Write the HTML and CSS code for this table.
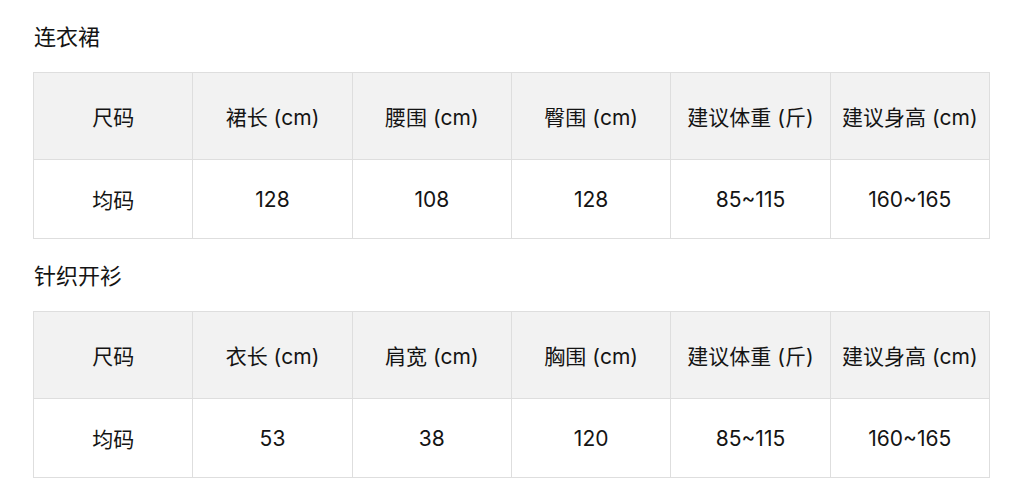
FILE: index.html
```html
<!DOCTYPE html>
<html lang="zh-CN">
<head>
<meta charset="utf-8">
<title>尺码表</title>
<link rel="stylesheet" href="styles.css">
</head>
<body>
<div class="page">
  <section class="section">
    <h2 class="title">连衣裙</h2>
    <table class="size-table">
      <thead>
        <tr><th>尺码</th><th>裙长 (cm)</th><th>腰围 (cm)</th><th>臀围 (cm)</th><th>建议体重 (斤)</th><th>建议身高 (cm)</th></tr>
      </thead>
      <tbody>
        <tr><td>均码</td><td>128</td><td>108</td><td>128</td><td>85~115</td><td>160~165</td></tr>
      </tbody>
    </table>
  </section>
  <section class="section">
    <h2 class="title">针织开衫</h2>
    <table class="size-table">
      <thead>
        <tr><th>尺码</th><th>衣长 (cm)</th><th>肩宽 (cm)</th><th>胸围 (cm)</th><th>建议体重 (斤)</th><th>建议身高 (cm)</th></tr>
      </thead>
      <tbody>
        <tr><td>均码</td><td>53</td><td>38</td><td>120</td><td>85~115</td><td>160~165</td></tr>
      </tbody>
    </table>
  </section>
</div>
</body>
</html>
```

FILE: styles.css
```css
html, body {
  margin: 0;
  padding: 0;
  background: #ffffff;
}
body {
  font-family: Inter, "Noto Sans CJK SC", sans-serif;
  color: #141414;
}
.page {
  padding: 23px 34px 0 33px;
}
.section {
  margin-bottom: 23px;
}
.title {
  margin: 0 0 21px 1px;
  font-size: 22px;
  line-height: 28px;
  font-weight: 400;
}
.size-table {
  width: 957px;
  table-layout: fixed;
  border-collapse: collapse;
}
.size-table th,
.size-table td {
  border: 1px solid #dedede;
  text-align: center;
  font-size: 21px;
  font-weight: 400;
  padding: 0;
}
.size-table th {
  background: #f2f2f2;
  height: 86px;
}
.size-table td {
  height: 78px;
}
```
